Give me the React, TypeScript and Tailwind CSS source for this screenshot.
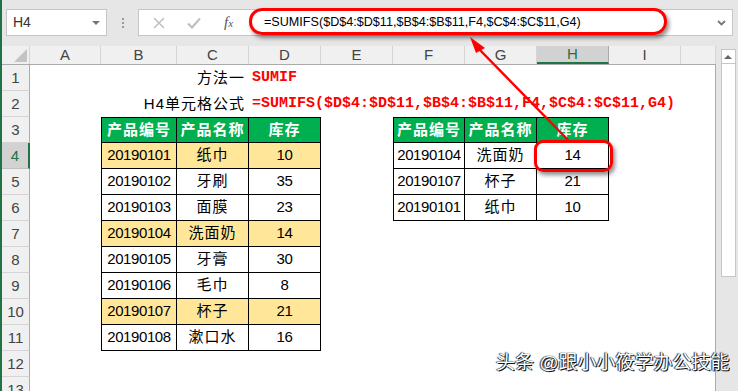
import React from 'react';

const colW = ['w-[71px]', 'w-[76px]', 'w-[72px]', 'w-[72px]', 'w-[72px]', 'w-[72px]', 'w-[72px]', 'w-[72px]', 'w-[72px]', 'w-[35px]'];
const colNames = ['A', 'B', 'C', 'D', 'E', 'F', 'G', 'H', 'I', ''];

const leftRows = [
  ['20190101', '纸巾', '10'],
  ['20190102', '牙刷', '35'],
  ['20190103', '面膜', '23'],
  ['20190104', '洗面奶', '14'],
  ['20190105', '牙膏', '30'],
  ['20190106', '毛巾', '8'],
  ['20190107', '杯子', '21'],
  ['20190108', '漱口水', '16'],
];

const rightRows = [
  ['20190104', '洗面奶', '14'],
  ['20190107', '杯子', '21'],
  ['20190101', '纸巾', '10'],
];

const header = ['产品编号', '产品名称', '库存'];
const formula = '=SUMIFS($D$4:$D$11,$B$4:$B$11,F4,$C$4:$C$11,G4)';

type Cell = { text?: string; kind?: 'head' | 'hl' | 'plain'; first?: boolean; top?: boolean };

function TableCell({ c, w }: { c?: Cell; w: string }) {
  if (!c) return <div className={`${w} h-full shrink-0`} />;
  const bg = c.kind === 'head' ? 'bg-[#00b050] text-white font-bold' : c.kind === 'hl' ? 'bg-[#ffe699] text-black' : 'bg-white text-black';
  const isNum = c.text && /^\d+$/.test(c.text);
  return (
    <div
      className={`${w} h-full shrink-0 flex items-center justify-center border-r border-b border-black ${c.first ? 'border-l' : ''} ${c.top ? 'border-t' : ''} ${bg} ${isNum ? 'text-[15px] tracking-[-0.4px]' : 'text-[15px] tracking-[1px]'}`}
    >
      {c.text}
    </div>
  );
}

function buildRow(r: number): (Cell | undefined)[] {
  const cells: (Cell | undefined)[] = new Array(10).fill(undefined);
  if (r === 3) {
    header.forEach((t, i) => {
      cells[1 + i] = { text: t, kind: 'head', first: i === 0, top: true };
      cells[5 + i] = { text: t, kind: 'head', first: i === 0, top: true };
    });
  }
  if (r >= 4 && r <= 11) {
    const row = leftRows[r - 4];
    const hl = r === 4 || r === 7 || r === 10;
    row.forEach((t, i) => {
      cells[1 + i] = { text: t, kind: hl ? 'hl' : 'plain', first: i === 0 };
    });
  }
  if (r >= 4 && r <= 6) {
    const row = rightRows[r - 4];
    row.forEach((t, i) => {
      cells[5 + i] = { text: t, kind: 'plain', first: i === 0 };
    });
  }
  return cells;
}

function SheetRow({ r }: { r: number }) {
  const selected = r === 4;
  if (r === 1 || r === 2) {
    return (
      <div className="flex h-[26px]">
        <div className="w-[28px] shrink-0 flex items-end justify-center pb-[1px] text-[15px] bg-[#f0f0f0] text-[#444] border-r border-r-[#ababab] border-b border-b-[#d4d4d4]">
          {r}
        </div>
        <div className="w-[71px] shrink-0" />
        <div className="w-[76px] shrink-0" />
        <div className="w-[72px] shrink-0 flex items-center justify-end pr-[4px] text-[15px] tracking-[1px] whitespace-nowrap text-black">
          {r === 1 ? '方法一' : 'H4单元格公式'}
        </div>
        <div className="w-[72px] shrink-0 flex items-center pl-[3px] whitespace-nowrap overflow-visible font-['Liberation_Mono',monospace] font-bold text-[15px] text-[#ff0000]">
          {r === 1 ? 'SUMIF' : formula}
        </div>
      </div>
    );
  }
  const cells = buildRow(r);
  return (
    <div className="flex h-[26px]">
      <div
        className={`w-[28px] shrink-0 flex items-end justify-center pb-[1px] text-[15px] ${
          selected
            ? 'bg-[#d2d2d2] text-[#217346] border-r-2 border-r-[#217346] border-b border-b-[#c0c0c0]'
            : 'bg-[#f0f0f0] text-[#444] border-r border-r-[#ababab] border-b border-b-[#d4d4d4]'
        }`}
      >
        {r}
      </div>
      {cells.map((c, i) => (
        <TableCell key={i} c={c} w={colW[i]} />
      ))}
    </div>
  );
}

export default function App() {
  const rows = Array.from({ length: 13 }, (_, i) => i + 1);
  return (
    <div className="relative w-[738px] h-[391px] overflow-hidden bg-[#e6e6e6] font-['Liberation_Sans','Noto_Sans_CJK_SC',sans-serif] text-[#222]">
      <div className="flex h-full">
        {/* left green edge */}
        <div className="w-[2px] h-full bg-[#217346] shrink-0" />

        <div className="flex-1 flex flex-col">
          {/* formula bar */}
          <div className="h-[46px] shrink-0 flex items-start pt-[9px]">
            <div className="ml-[4px] w-[101px] h-[27px] bg-white border border-[#c6c6c6] flex items-center justify-between pl-[6px] pr-[6px]">
              <span className="text-[14px] text-[#333]">H4</span>
              <span className="w-0 h-0 border-l-[4px] border-r-[4px] border-t-[4px] border-l-transparent border-r-transparent border-t-[#777]" />
            </div>
            <div className="w-[31px] h-[27px] flex flex-col items-center justify-center gap-[2px]">
              <span className="w-[2px] h-[2px] bg-[#999]" />
              <span className="w-[2px] h-[2px] bg-[#999]" />
              <span className="w-[2px] h-[2px] bg-[#999]" />
            </div>
            <div className="w-[595px] h-[27px] bg-white border border-[#c6c6c6] flex items-center">
              <div className="w-[110px] shrink-0 flex items-center">
                <svg width="12" height="12" viewBox="0 0 12 12" className="ml-[14px]">
                  <path d="M1 1 L11 11 M11 1 L1 11" stroke="#c0c0c0" strokeWidth="1.6" fill="none" />
                </svg>
                <svg width="14" height="12" viewBox="0 0 14 12" className="ml-[22px]">
                  <path d="M1 6.5 L5 10.5 L13 1.5" stroke="#c0c0c0" strokeWidth="2.2" fill="none" />
                </svg>
                <span className="ml-[23px] font-['Liberation_Serif',serif] italic text-[15px] text-[#555]">
                  f<span className="text-[11px]">x</span>
                </span>
              </div>
              <div className="flex-1 pl-[15px] text-[12.6px] text-black whitespace-nowrap">{formula}</div>
              <svg width="9" height="6" viewBox="0 0 9 6" className="mr-[6px]">
                <path d="M1 1 L4.5 4.5 L8 1" stroke="#777" strokeWidth="1.8" fill="none" />
              </svg>
            </div>
          </div>

          {/* sheet */}
          <div className="flex-1 flex">
            <div className="w-[714px] flex flex-col border-r border-[#ababab]">
              {/* column header */}
              <div className="flex h-[19px] shrink-0 border-b border-[#ababab] bg-[#f0f0f0]">
                <div className="w-[28px] shrink-0 relative border-r border-[#d4d4d4]">
                  <svg width="13" height="13" viewBox="0 0 13 13" className="absolute right-[2px] bottom-[2px]">
                    <path d="M13 0 L13 13 L0 13 Z" fill="#c3c3c3" />
                  </svg>
                </div>
                {colNames.map((n, i) => (
                  <div
                    key={i}
                    className={`${colW[i]} shrink-0 flex items-center justify-center text-[15px] ${
                      n === 'H'
                        ? 'bg-[#d2d2d2] text-[#217346] border-b-2 border-b-[#217346] border-r border-r-[#ababab]'
                        : 'text-[#444] border-r border-r-[#d4d4d4]'
                    }`}
                  >
                    {n}
                  </div>
                ))}
              </div>
              <div className="flex-1 bg-white overflow-hidden">
                {rows.map((r) => (
                  <SheetRow key={r} r={r} />
                ))}
              </div>
            </div>

            {/* scrollbar */}
            <div className="w-[22px] flex flex-col items-center pt-[3px] pl-[2px]">
              <div className="w-[15px] h-[15px] bg-white border border-[#c6c6c6] flex items-center justify-center">
                <span className="w-0 h-0 border-l-[4px] border-r-[4px] border-b-[4px] border-l-transparent border-r-transparent border-b-[#666]" />
              </div>
              <div className="w-[15px] h-[213px] bg-white border border-[#c6c6c6] border-t-0" />
            </div>
          </div>
        </div>
      </div>

      {/* overlays */}
      <div className="absolute left-[249px] top-[8px] w-[418px] h-[27px] rounded-[13px] border-[3px] border-[#ff0000] shadow-[2px_3px_4px_rgba(0,0,0,0.45)]" />
      <div className="absolute left-[534px] top-[140px] w-[79px] h-[32px] rounded-[9px] border-[3px] border-[#ff0000] shadow-[2px_3px_4px_rgba(0,0,0,0.45)]" />
      <svg className="absolute left-0 top-0" width="738" height="391" viewBox="0 0 738 391">
        <line x1="568" y1="140" x2="476" y2="46" stroke="#ff0000" strokeWidth="2.5" />
        <path d="M470 37 L485 48 L476 53 Z" fill="#ff0000" />
      </svg>
      <div className="absolute left-[496px] top-[349px] text-[19px] text-white whitespace-nowrap [text-shadow:1px_1px_0_#111,0_0_1px_#000,-1px_0_1px_#333]">
        头条 @跟小小筱学办公技能
      </div>
    </div>
  );
}
